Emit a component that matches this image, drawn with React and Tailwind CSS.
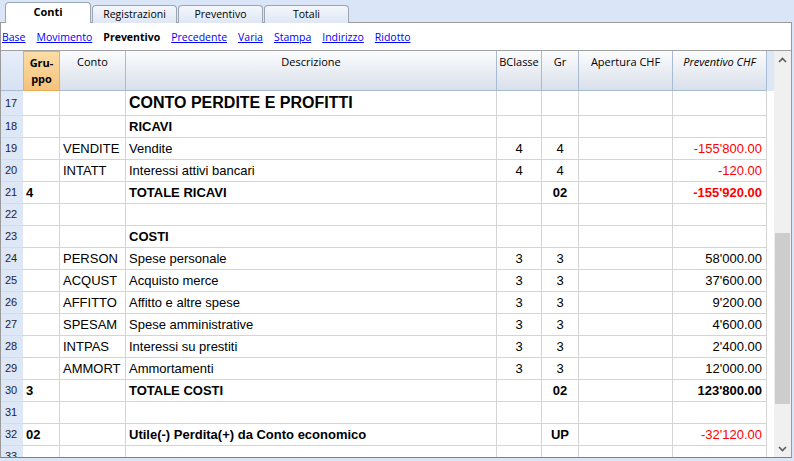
import React from 'react';

const cols = [
  { key: 'grp', w: 'w-[37px]', align: 'text-left pl-[3px]' },
  { key: 'conto', w: 'w-[66px]', align: 'text-left pl-[3px]' },
  { key: 'desc', w: 'w-[371px]', align: 'text-left pl-[3px]' },
  { key: 'bcl', w: 'w-[45px]', align: 'text-center' },
  { key: 'gr', w: 'w-[37px]', align: 'text-center' },
  { key: 'ap', w: 'w-[94px]', align: 'text-right pr-[4px]' },
  { key: 'prev', w: 'w-[94px]', align: 'text-right pr-[4px]' },
];

const righe = [
  { n: 17, desc: 'CONTO PERDITE E PROFITTI', titolo: true },
  { n: 18, desc: 'RICAVI', bold: true },
  { n: 19, conto: 'VENDITE', desc: 'Vendite', bcl: '4', gr: '4', prev: "-155'800.00", rosso: true },
  { n: 20, conto: 'INTATT', desc: 'Interessi attivi bancari', bcl: '4', gr: '4', prev: '-120.00', rosso: true },
  { n: 21, grp: '4', desc: 'TOTALE RICAVI', gr: '02', prev: "-155'920.00", bold: true, rosso: true },
  { n: 22 },
  { n: 23, desc: 'COSTI', bold: true },
  { n: 24, conto: 'PERSON', desc: 'Spese personale', bcl: '3', gr: '3', prev: "58'000.00" },
  { n: 25, conto: 'ACQUST', desc: 'Acquisto merce', bcl: '3', gr: '3', prev: "37'600.00" },
  { n: 26, conto: 'AFFITTO', desc: 'Affitto e altre spese', bcl: '3', gr: '3', prev: "9'200.00" },
  { n: 27, conto: 'SPESAM', desc: 'Spese amministrative', bcl: '3', gr: '3', prev: "4'600.00" },
  { n: 28, conto: 'INTPAS', desc: 'Interessi su prestiti', bcl: '3', gr: '3', prev: "2'400.00" },
  { n: 29, conto: 'AMMORT', desc: 'Ammortamenti', bcl: '3', gr: '3', prev: "12'000.00" },
  { n: 30, grp: '3', desc: 'TOTALE COSTI', gr: '02', prev: "123'800.00", bold: true },
  { n: 31 },
  { n: 32, grp: '02', desc: 'Utile(-) Perdita(+) da Conto economico', gr: 'UP', prev: "-32'120.00", bold: true, rosso: true, prevNormale: true },
  { n: 33 },
];

const Chevron = ({ down }) => (
  <svg width="9" height="6" viewBox="0 0 9 6" className={down ? 'rotate-180' : ''}>
    <path d="M1 5 L4.5 1.5 L8 5" fill="none" stroke="#5a5a5a" strokeWidth="1.6" />
  </svg>
);

const Riga = ({ r }) => {
  const h = r.n === 17 ? 'h-[25px]' : 'h-[22px]';
  return (
    <div className={`flex ${h} shrink-0`}>
      <div className="w-[22px] shrink-0 bg-[#dde7f5] border-b border-[#d4dceb] pl-[4px] flex items-center text-[11px] text-[#1c1c3c]">
        {r.n}
      </div>
      {cols.map(c => {
        let cls = '';
        if (c.key === 'desc' && r.titolo) cls = 'font-bold text-[16px]';
        else if (c.key === 'grp' || c.key === 'gr' || c.key === 'desc') cls = r.bold ? 'font-bold' : '';
        else if (c.key === 'prev') {
          cls = `${r.rosso ? 'text-[#ff0000]' : ''} ${r.bold && !r.prevNormale ? 'font-bold' : ''}`;
        }
        const just = c.align.includes('right') ? 'justify-end' : c.align.includes('center') ? 'justify-center' : '';
        return (
          <div
            key={c.key}
            className={`${c.w} shrink-0 border-r border-b border-[#d4d4d4] flex items-center ${c.align} ${just} whitespace-nowrap overflow-hidden ${cls}`}
          >
            {r[c.key]}
          </div>
        );
      })}
      <div className="w-[7px] shrink-0 bg-white" />
    </div>
  );
};

export default function App() {
  const tabs = ['Registrazioni', 'Preventivo', 'Totali'];
  const links = ['Base', 'Movimento', 'Preventivo', 'Precedente', 'Varia', 'Stampa', 'Indirizzo', 'Ridotto'];

  return (
    <div className="w-[794px] h-[461px] bg-[#dae5f7] overflow-hidden font-['Open_Sans',sans-serif] text-black">
      {/* tabs */}
      <div className="h-[23px] flex items-end pl-[5px] gap-[1px]">
        <div className="relative z-10 w-[86px] h-[21px] bg-white border border-b-0 border-[#9ba5b4] rounded-t-[4px] flex items-center justify-center text-[11px] font-bold pb-[1px]">
          Conti
        </div>
        {tabs.map(t => (
          <div
            key={t}
            className="w-[85px] h-[18px] bg-gradient-to-b from-[#f4f7fc] to-[#dfe7f4] border border-b-0 border-[#9ba5b4] rounded-t-[4px] flex items-center justify-center text-[10.5px]"
          >
            {t}
          </div>
        ))}
      </div>

      {/* frame */}
      <div className="-mt-px w-[792px] h-[436px] bg-white border border-[#9a9a9a] border-b-[#7f7f7f] flex flex-col">
        <div className="h-[27px] shrink-0 flex items-center gap-[11px] pl-[1px] pt-[3px] text-[10.5px]">
          {links.map(l =>
            l === 'Preventivo' ? (
              <span key={l} className="font-bold">{l}</span>
            ) : (
              <span key={l} className="text-[#0000ff] underline">{l}</span>
            )
          )}
        </div>

        <div className="flex flex-1 border-t border-[#a0a0a0] overflow-hidden">
          {/* table */}
          <div className="w-[773px] shrink-0 flex flex-col overflow-hidden font-['Liberation_Sans',Arial,sans-serif] text-[13px]">
            {/* header */}
            <div className="flex h-[40px] shrink-0 font-['Open_Sans',sans-serif] text-[11px] leading-[16px]">
              <div className="w-[22px] shrink-0 bg-gradient-to-b from-[#e6eef9] to-[#d7e2f2] border-b border-[#a9bbd3]" />
              <div className="w-[37px] shrink-0 bg-gradient-to-b from-[#fbdda6] to-[#f5c27c] border border-[#eeac55] font-bold text-center pt-[3px]">
                Gru-<br />ppo
              </div>
              {[
                ['w-[66px]', 'Conto', ''],
                ['w-[371px]', 'Descrizione', ''],
                ['w-[45px]', 'BClasse', ''],
                ['w-[37px]', 'Gr', ''],
                ['w-[94px]', 'Apertura CHF', ''],
                ['w-[94px]', 'Preventivo CHF', 'italic'],
              ].map(([w, t, x]) => (
                <div
                  key={t}
                  className={`${w} shrink-0 bg-gradient-to-b from-[#fbfcfd] to-[#d9e0ea] border-r border-b border-[#a9bbd3] text-center pt-[3px] whitespace-nowrap ${x}`}
                >
                  {t}
                </div>
              ))}
              <div className="w-[7px] shrink-0 bg-[#dde7f5]" />
            </div>

            {righe.map(r => (
              <Riga key={r.n} r={r} />
            ))}
          </div>

          {/* scrollbar */}
          <div className="w-[17px] shrink-0 bg-[#f0f0f0] flex flex-col">
            <div className="h-[17px] shrink-0 flex items-center justify-center">
              <Chevron />
            </div>
            <div className="h-[165px] shrink-0" />
            <div className="h-[171px] shrink-0 ml-[1px] w-[15px] bg-[#cdcdcd]" />
            <div className="flex-1" />
            <div className="h-[17px] shrink-0 flex items-center justify-center">
              <Chevron down />
            </div>
          </div>
        </div>
      </div>
    </div>
  );
}
